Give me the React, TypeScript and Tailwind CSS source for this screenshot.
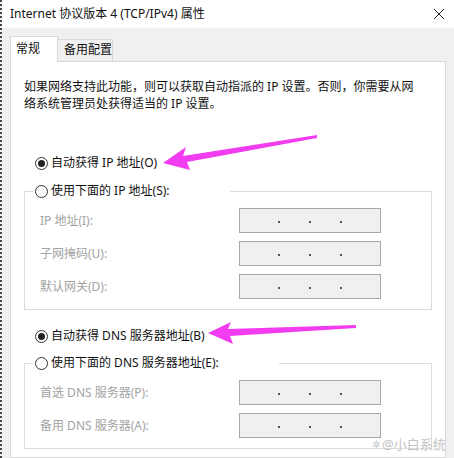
import React from 'react';

const font = { fontFamily: '"Noto Sans", "Noto Sans CJK SC", sans-serif' };

function Radio({ checked, label }: { checked?: boolean; label: string }) {
  return (
    <div className="flex items-center h-[18px] text-[12px] text-[#111]">
      <span className="w-[13px] h-[13px] rounded-full border border-[#333] bg-white flex items-center justify-center mr-[3px]">
        {checked && <span className="w-[7px] h-[7px] rounded-full bg-[#222]" />}
      </span>
      <span>{label}</span>
    </div>
  );
}

function IpBox() {
  return (
    <div className="w-[142px] h-[25px] bg-[#f0f0f0] border border-[#a8a8a8] flex items-center justify-center gap-[29px] pt-[3px]">
      <span className="w-[2px] h-[2px] bg-[#555]" />
      <span className="w-[2px] h-[2px] bg-[#555]" />
      <span className="w-[2px] h-[2px] bg-[#555]" />
    </div>
  );
}

function Field({ label }: { label: string }) {
  return (
    <div className="flex items-center justify-between">
      <span className="text-[12px] text-[#a3a3a3]">{label}</span>
      <IpBox />
    </div>
  );
}

function Group({ legend, fields }: { legend: string; fields: string[] }) {
  return (
    <fieldset className="mx-[13px] border border-[#dcdcdc] pb-[10px]">
      <legend className="ml-[8px] pl-[2px] pr-[60px] bg-white">
        <Radio label={legend} />
      </legend>
      <div className="flex flex-col gap-[8px] pt-[8px] pl-[15px] pr-[50px]">
        {fields.map((f) => (
          <Field key={f} label={f} />
        ))}
      </div>
    </fieldset>
  );
}

export default function App() {
  return (
    <div
      className="relative w-[454px] h-[458px] bg-[#f0f0f0] border-l-2 border-dotted border-[#444] overflow-hidden flex flex-col"
      style={font}
    >
      {/* title bar */}
      <div className="h-[28px] bg-white flex items-center justify-between pl-[8px] pr-[8px] shrink-0">
        <span className="text-[12px] text-[#111]">Internet 协议版本 4 (TCP/IPv4) 属性</span>
        <svg width="12" height="12" viewBox="0 0 12 12" className="mr-[1px]">
          <path d="M1 1 L11 11 M11 1 L1 11" stroke="#222" strokeWidth="1" />
        </svg>
      </div>

      {/* tabs */}
      <div className="flex items-end pl-[8px] pt-[8px] shrink-0">
        <div className="w-[48px] h-[26px] bg-white border border-b-0 border-[#d9d9d9] pl-[5px] pt-[3px] text-[12px] text-[#111] relative z-10 -mb-px">
          常规
        </div>
        <div className="w-[55px] h-[22px] bg-[#f0f0f0] border border-l-0 border-b-0 border-[#d9d9d9] pl-[6px] pt-[1px] text-[12px] text-[#111]">
          备用配置
        </div>
      </div>

      {/* panel */}
      <div className="mx-[8px] flex-1 bg-white border border-[#d9d9d9]">
        <p className="px-[13px] pt-[16px] text-[12px] leading-[17px] text-[#111]">
          如果网络支持此功能，则可以获取自动指派的 IP 设置。否则，你需要从网
          <br />
          络系统管理员处获得适当的 IP 设置。
        </p>

        <div className="mt-[42px] ml-[24px]">
          <Radio checked label="自动获得 IP 地址(O)" />
        </div>
        <div className="mt-[10px]">
          <Group legend="使用下面的 IP 地址(S):" fields={['IP 地址(I):', '子网掩码(U):', '默认网关(D):']} />
        </div>

        <div className="mt-[17px] ml-[24px]">
          <Radio checked label="自动获得 DNS 服务器地址(B)" />
        </div>
        <div className="mt-[9px]">
          <Group legend="使用下面的 DNS 服务器地址(E):" fields={['首选 DNS 服务器(P):', '备用 DNS 服务器(A):']} />
        </div>
      </div>

      {/* annotation arrows */}
      <svg className="absolute left-0 top-0 pointer-events-none" width="454" height="458" viewBox="0 0 454 458">
        <polygon
          points="161,163 184,147 181,156 315,135 315,138 185,162 188,170"
          fill="#f23cf0"
        />
        <polygon
          points="206,333 229,322 226,329 354,325 354,328 228,336 231,344"
          fill="#f23cf0"
        />
      </svg>

      {/* watermark */}
      <div className="absolute left-[370px] top-[435px] flex items-center gap-[2px] text-[13px] text-[#c4c4c4]">
        <span className="text-[10px]">✲</span>
        <span>@小白系统</span>
      </div>
    </div>
  );
}
